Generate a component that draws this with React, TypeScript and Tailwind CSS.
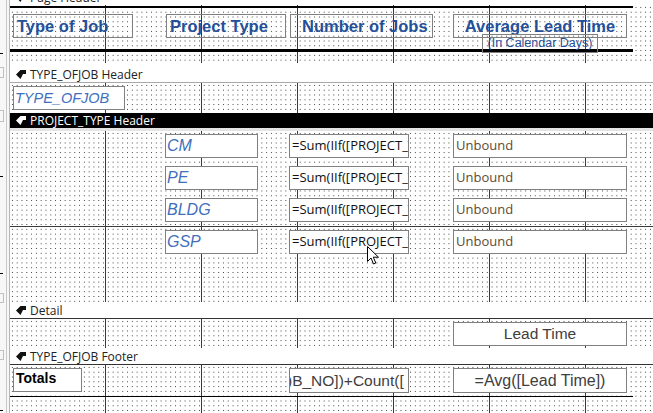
import React from "react";

const GRID =
  "relative bg-white [background-image:linear-gradient(90deg,transparent_95px,#3a3a3a_95px,#3a3a3a_96px,transparent_96px),linear-gradient(180deg,transparent_95px,#3a3a3a_95px,#3a3a3a_96px,transparent_96px),radial-gradient(circle,#3c3c3c_0.55px,transparent_0.95px)] [background-size:96px_100%,100%_96px,4.8px_4.8px]";

const SANS = "font-['Liberation_Sans',Arial,sans-serif]";
const UI = "font-['Open_Sans','Noto_Sans',sans-serif]";

function SectionIcon({ light }: { light?: boolean }) {
  return (
    <svg width="10" height="9" viewBox="0 0 10 9" className="mr-[4px] shrink-0">
      <path d="M0 4.5 L4.5 0 L10 0 L10 4 L7 4 L4.5 9 Z" fill={light ? "#fff" : "#111"} />
    </svg>
  );
}

function SectionBar({ label, dark, h, line }: { label: string; dark?: boolean; h: string; line: string }) {
  return (
    <div className={`${h} flex items-end pl-[6px] ${line} ${dark ? "bg-black text-white" : "bg-white text-[#222]"}`}>
      <div className={`flex items-center text-[12px] leading-[15px] ${UI}`}>
        <SectionIcon light={dark} />
        {label}
      </div>
    </div>
  );
}

// a control on the report's free design canvas
function Box({ x, y, w, h, className = "", children }: { x: number; y: number; w: number; h: number; className?: string; children?: React.ReactNode }) {
  return (
    <div
      className={`absolute overflow-hidden whitespace-nowrap border border-[#808080] ${className}`}
      style={{ left: x, top: y, width: w, height: h }}
    >
      {children}
    </div>
  );
}

function Ruler() {
  return (
    <div className="relative w-[10px] shrink-0 bg-[#f7f7f7] border-r border-[#b5b5b5]">
      <div className="absolute right-[2px] top-0 bottom-0 w-px bg-[#c8c8c8]" />
      {[53, 176, 273, 410].map((t) => (
        <div key={t} className="absolute left-0 h-px w-[3px] bg-black" style={{ top: t }} />
      ))}
      {[
        [67, 11],
        [110, 12],
        [293, 10],
        [350, 10],
      ].map(([t, hh]) => (
        <div key={t} className="absolute left-0 w-[4px] border border-l-0 border-[#c0c0c0]" style={{ top: t, height: hh }} />
      ))}
    </div>
  );
}

const rows = [
  { top: 3, label: "CM" },
  { top: 35, label: "PE" },
  { top: 67, label: "BLDG" },
  { top: 99, label: "GSP" },
];

export default function App() {
  const headLabel = `${SANS} text-[16.5px] font-bold text-[#24509a] leading-[22px]`;
  return (
    <div className="flex h-[413px] w-[653px] overflow-hidden bg-white">
      <Ruler />
      <div className="flex flex-1 flex-col">
        {/* Page Header bar (scrolled, mostly hidden) */}
        <div className="h-[5px] overflow-hidden bg-white pl-[6px]">
          <div className={`-mt-[10px] flex items-center text-[12px] leading-[15px] text-[#222] ${UI}`}>
            <SectionIcon />
            Page Header
          </div>
        </div>

        {/* Page Header */}
        <div className={`${GRID} h-[58px]`}>
          <div className="absolute left-0 top-[1px] h-[2px] w-[623px] bg-black" />
          <Box x={3} y={9} w={120} h={24} className="bg-transparent">
            <div className={`${headLabel} pl-[3px]`}>Type of Job</div>
          </Box>
          <Box x={156} y={9} w={120} h={24} className="bg-transparent">
            <div className={`${headLabel} pl-[3px]`}>Project Type</div>
          </Box>
          <Box x={280} y={9} w={143} h={24} className="bg-transparent">
            <div className={`${headLabel} pl-[11px]`}>Number of Jobs</div>
          </Box>
          <Box x={443} y={9} w={174} h={24} className="bg-transparent">
            <div className={`${headLabel} text-center`}>Average Lead Time</div>
          </Box>
          <div className="absolute left-0 top-[44px] h-[3px] w-[623px] bg-black" />
          <Box x={472} y={29} w={116} h={19} className="bg-transparent">
            <div className={`${SANS} text-center text-[12.5px] leading-[17px] text-[#24509a]`}>(In Calendar Days)</div>
          </Box>
        </div>

        <SectionBar label="TYPE_OFJOB Header" h="h-[20px]" line="border-b border-[#a8a8a8]" />

        {/* TYPE_OFJOB Header */}
        <div className={`${GRID} h-[30px]`}>
          <Box x={3} y={3} w={112} h={24} className="bg-white">
            <div className={`${SANS} pl-[1px] text-[14.5px] italic leading-[22px] text-[#3f6fbd]`}>TYPE_OFJOB</div>
          </Box>
        </div>

        <SectionBar label="PROJECT_TYPE Header" dark h="h-[18px]" line="border-b-[3px] border-[#e4e4e4]" />

        {/* PROJECT_TYPE Header */}
        <div className={`${GRID} h-[171px]`}>
          {rows.map((r) => (
            <React.Fragment key={r.label}>
              <Box x={155} y={r.top} w={93} h={24} className="bg-white">
                <div className={`${SANS} pl-[1px] text-[16px] italic leading-[22px] text-[#3f6fbd]`}>{r.label}</div>
              </Box>
              <Box x={279} y={r.top} w={120} h={24} className="bg-white">
                <div className={`${UI} pl-[2px] text-[13px] leading-[21px] text-[#111]`}>=Sum(IIf([PROJECT_TYPE]</div>
              </Box>
              <Box x={443} y={r.top} w={174} h={24} className="bg-white">
                <div className={`${UI} pl-[2px] text-[13px] leading-[21px] text-[#5f4a30]`}>Unbound</div>
              </Box>
            </React.Fragment>
          ))}
          <svg className="absolute left-[357px] top-[115px]" width="13" height="19" viewBox="0 0 13 19">
            <path d="M0.5 0.5 L0.5 15.5 L4 12 L6.5 18 L8.8 17 L6.3 11.2 L11.5 11.2 Z" fill="#fff" stroke="#000" strokeWidth="1" strokeLinejoin="miter" />
          </svg>
        </div>

        <SectionBar label="Detail" h="h-[17px]" line="border-b border-[#333]" />

        {/* Detail */}
        <div className={`${GRID} h-[29px]`}>
          <Box x={443} y={3} w={174} h={24} className="bg-white">
            <div className={`${SANS} text-center text-[15.5px] leading-[22px] text-[#404040]`}>Lead Time</div>
          </Box>
        </div>

        <SectionBar label="TYPE_OFJOB Footer" h="h-[17px]" line="border-b border-[#333]" />

        {/* TYPE_OFJOB Footer */}
        <div className={`${GRID} flex-1`}>
          <Box x={3} y={3} w={69} h={24} className="bg-white">
            <div className={`${SANS} pl-[2px] text-[14px] font-bold leading-[18px] text-black`}>Totals</div>
          </Box>
          <Box x={279} y={3} w={120} h={25} className="bg-white">
            <div className={`${SANS} -ml-[3px] text-[15.5px] leading-[23px] text-[#404040]`}>)B_NO])+Count([</div>
          </Box>
          <Box x={443} y={3} w={174} h={25} className="bg-white">
            <div className={`${SANS} text-center text-[16px] leading-[23px] text-[#404040]`}>=Avg([Lead Time])</div>
          </Box>
          <div className="absolute left-0 top-[31px] h-px w-[623px] bg-black" />
        </div>
      </div>
    </div>
  );
}
